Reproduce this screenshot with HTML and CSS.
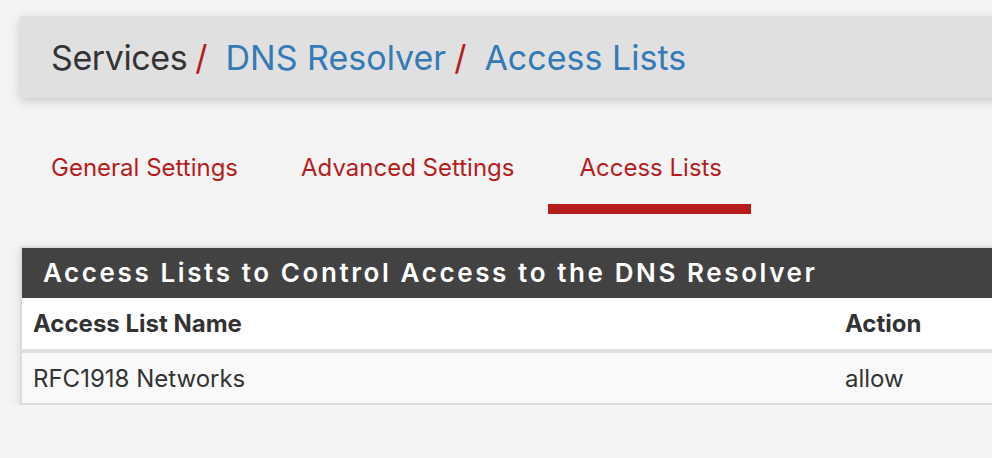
FILE: index.html
```html
<!DOCTYPE html>
<html>
<head>
<meta charset="utf-8">
<link rel="stylesheet" href="styles.css">
</head>
<body>
<div class="page">
  <div class="breadcrumb">
    <span class="crumb">Services</span><span class="sep">/</span>
    <a class="crumb link">DNS Resolver</a><span class="sep">/</span>
    <a class="crumb link">Access Lists</a>
  </div>
  <nav class="tabs">
    <a class="tab">General Settings</a>
    <a class="tab">Advanced Settings</a>
    <a class="tab active">Access Lists</a>
  </nav>
  <div class="panel">
    <div class="panel-heading">Access Lists to Control Access to the DNS Resolver</div>
    <table class="list">
      <thead>
        <tr><th class="col-name">Access List Name</th><th>Action</th></tr>
      </thead>
      <tbody>
        <tr><td>RFC1918 Networks</td><td>allow</td></tr>
      </tbody>
    </table>
  </div>
</div>
</body>
</html>
```

FILE: styles.css
```css
html, body {
  margin: 0;
  padding: 0;
  background: #f4f4f4;
  overflow: hidden;
  font-family: Inter, "Noto Sans", sans-serif;
}
.page {
  margin-left: 20px;
  width: 1040px;
  padding-top: 16px;
}
.breadcrumb {
  height: 82px;
  background: #e0e0e0;
  box-shadow: 0 3px 10px rgba(0,0,0,0.18);
  display: flex;
  align-items: center;
  padding-left: 31px;
  font-size: 34px;
  color: #333;
  box-sizing: border-box;
}
.crumb:first-child { letter-spacing: -0.4px; }
.link { color: #337ab7; }
.sep {
  color: #b71c1c;
  margin: 0 18px 0 8px;
}
.tabs {
  display: flex;
  margin-top: 42px;
  height: 74px;
  box-sizing: border-box;
}
.tab {
  font-size: 24px;
  color: #b71c1c;
  padding: 13px 31px 0 31px;
  height: 74px;
  box-sizing: border-box;
  border-bottom: 10px solid transparent;
}
.tab:nth-child(2) { padding-left: 32px; }
.tab.active {
  border-bottom-color: #b71c1c;
  margin-left: 3px;
  padding-right: 29px;
}
.panel {
  margin-top: 32px;
  border: 2px solid #dcdcdc;
  background: #fff;
  box-shadow: 0 4px 10px rgba(0,0,0,0.12);
}
.panel-heading {
  background: #424242;
  color: #fff;
  font-weight: 600;
  font-size: 26px;
  letter-spacing: 2.6px;
  height: 50px;
  line-height: 50px;
  padding-left: 21px;
}
.list {
  width: 100%;
  border-collapse: collapse;
  font-size: 24px;
  color: #333;
}
.list th, .list td {
  text-align: left;
  padding: 0 11px;
  height: 51px;
}
.list th { font-weight: 700; background: #fff; border-bottom: 4px solid #e0e0e0; }
.list td { background: #f9f9f9; height: 50px; }
.col-name { width: 790px; }
```
